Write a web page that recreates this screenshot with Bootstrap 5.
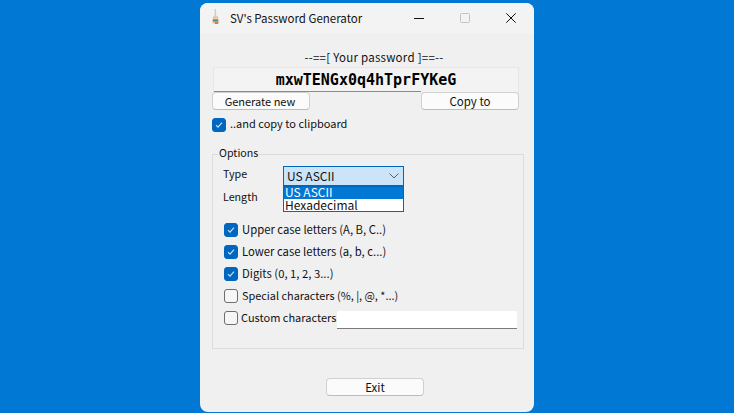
<!DOCTYPE html>
<html lang="en"><head><meta charset="utf-8"><title>SV's Password Generator</title>
<link href="https://cdn.jsdelivr.net/npm/bootstrap@5.3.0/dist/css/bootstrap.min.css" rel="stylesheet">
<style>
html,body{height:100%;margin:0}
body{background:#0078d4;overflow:hidden;font-family:"Noto Sans CJK JP","Noto Sans",sans-serif;font-size:11.5px;line-height:16px;color:#111}
.appwin{position:absolute;left:200px;top:3px;width:334px;height:409px;background:#f0f0f0;border-radius:8px;overflow:hidden}
.tbar{height:30px;background:#f3f3f3;padding-left:10px}
.ttl{font-size:11.5px;margin-left:8px;line-height:14px;padding-bottom:1px}
.wbtn{width:46px;height:30px}
.pw-wrap{padding:0 15px 0 12px;margin-top:16px}
.pw-head{height:18px;line-height:17px;text-align:center;padding-left:17px;letter-spacing:.25px}
.pw-box{height:25px;margin-left:1px;background:#f3f3f3;border:1px solid #e6e6e6;border-bottom:0;position:relative;text-align:center;font-family:"DejaVu Sans Mono",monospace;font-weight:700;font-size:15px;line-height:24px;color:#000}
.pw-line{position:absolute;left:0;bottom:0;width:207px;height:1px;background:#8a8a8a}
.wbutton{width:98px;height:18px;background:#fbfbfb;border:1px solid #d0d0d0;border-bottom-color:#bdbdbd;border-radius:4px;padding:0;font-size:11.5px;line-height:14px;color:#111;display:block}
.wbutton.gen{font-size:11px;padding-right:2px}
.ck{width:14px;height:14px;flex:none;border-radius:3px;border:1px solid #6e6e6e;background:#f6f6f6;display:block}
.ck.on{background:#0067c0;border-color:#0067c0}
.ck svg{display:block}
.cliprow{height:14px}
.cliptxt{font-size:11px;line-height:13px;padding-bottom:3px}
.optfs{margin:22px 10px 0 12px;height:195px;border:1px solid #dcdcdc;position:relative;padding:0 6px 0 10px}
.optleg{position:absolute;left:5px;top:-10px;background:#f0f0f0;padding:0 1px;line-height:16px;font-size:10.7px}
.lab{width:60px;flex:none;font-size:10.7px;line-height:14px;padding-bottom:4px}
.typerow{margin-top:11px;height:20px;position:relative}
.lenrow{margin-top:2px;height:22px}
.cbx{width:121px;height:20px;line-height:18px;border:1px solid #0067c0;background:#cce4f7;padding:0 3px;position:relative;font-size:12px}
.cbx svg{position:absolute;right:4px;top:6px}
.ddl{position:absolute;left:60px;top:20px;width:121px;background:#fff;border:1px solid #0067c0;z-index:5;font-size:12px}
.ddl>div{height:12px;padding-left:1px;line-height:12px}
.ddl .sel{background:#0078d4;color:#fff;line-height:10px}
.ckrow{height:22px;gap:4px;font-size:11.3px;line-height:14px;margin-left:1px}
.ckrow>span:last-child{padding-bottom:2px}
.ckrow .lift{padding-bottom:4px}
.ckrow .nar{font-size:10.9px}
.ckrows{margin-top:9px}
.ctxt{width:96px;flex:none;margin:0 -4px 0 -1px;white-space:nowrap;font-size:11px;padding-top:3px}
.cust{width:180px;flex:none;height:18px;margin-top:4px;background:#fff;border:0;border-bottom:1px solid #7a7a7a;border-radius:2px 2px 0 0;padding:0}
.exitrow{margin-top:29px;padding-left:126px}
</style></head><body>
<div class="appwin d-flex flex-column">
 <div class="tbar d-flex align-items-center">
  <svg width="12" height="18" viewBox="0 0 12 18"><rect x="4.600" y="0" width="1.500" height="7" fill="#d8cdb8"/><path d="M3 8c0-2 5-2 5 0l1.500 5c.5 3-7 3-7.500 0z" fill="#e9c9a8"/><rect x="3" y="10.500" width="5" height="2" fill="#3a8f9e"/><rect x="5" y="13" width="3" height="2" fill="#c8862f"/></svg>
  <span class="ttl">SV's Password Generator</span>
  <div class="ms-auto d-flex">
   <div class="wbtn d-flex align-items-center justify-content-center"><svg width="10" height="10" viewBox="0 0 10 10"><path d="M0 5.500h10" stroke="#111" fill="none"/></svg></div>
   <div class="wbtn d-flex align-items-center justify-content-center"><svg width="10" height="10" viewBox="0 0 10 10"><rect x=".5" y=".5" width="9" height="9" rx="1" fill="none" stroke="#c4c4c4"/></svg></div>
   <div class="wbtn d-flex align-items-center justify-content-center"><svg width="10" height="10" viewBox="0 0 10 10"><path d="M.3.300l9.400 9.400M9.700.300L.3 9.700" stroke="#111" fill="none"/></svg></div>
  </div>
 </div>
 <div class="pw-wrap">
  <div class="pw-head">--==[ Your password ]==--</div>
  <div class="pw-box">mxwTENGx0q4hTprFYKeG<span class="pw-line"></span></div>
  <div class="d-flex justify-content-between">
   <button type="button" class="wbutton gen">Generate new</button>
   <button type="button" class="wbutton">Copy to</button>
  </div>
  <div class="cliprow d-flex align-items-center mt-2 gap-1">
   <span class="ck on"><svg width="12" height="12" viewBox="0 0 12 12"><path d="M3 6.200l2 2 4-4.500" stroke="#cfe4f7" stroke-width="1.100" fill="none"/></svg></span>
   <span class="cliptxt">..and copy to clipboard</span>
  </div>
 </div>
 <div class="optfs">
  <span class="optleg">Options</span>
  <div class="typerow d-flex align-items-center">
   <span class="lab">Type</span>
   <div class="cbx">US ASCII<svg width="10" height="6" viewBox="0 0 10 6"><path d="M.5.500L5 5 9.500.5" stroke="#606060" fill="none"/></svg></div>
   <div class="ddl"><div class="sel">US ASCII</div><div>Hexadecimal</div></div>
  </div>
  <div class="lenrow d-flex align-items-center"><span class="lab">Length</span></div>
  <div class="ckrows">
   <div class="ckrow d-flex align-items-center"><span class="ck on"><svg width="12" height="12" viewBox="0 0 12 12"><path d="M3 6.200l2 2 4-4.500" stroke="#cfe4f7" stroke-width="1.100" fill="none"/></svg></span><span>Upper case letters (A, B, C..)</span></div>
   <div class="ckrow d-flex align-items-center"><span class="ck on"><svg width="12" height="12" viewBox="0 0 12 12"><path d="M3 6.200l2 2 4-4.500" stroke="#cfe4f7" stroke-width="1.100" fill="none"/></svg></span><span class="lift">Lower case letters (a, b, c...)</span></div>
   <div class="ckrow d-flex align-items-center"><span class="ck on"><svg width="12" height="12" viewBox="0 0 12 12"><path d="M3 6.200l2 2 4-4.500" stroke="#cfe4f7" stroke-width="1.100" fill="none"/></svg></span><span class="lift">Digits (0, 1, 2, 3...)</span></div>
   <div class="ckrow d-flex align-items-center"><span class="ck"></span><span class="nar lift">Special characters (%, |, @, *...)</span></div>
   <div class="ckrow d-flex align-items-start"><span class="ck mt-1"></span><span class="ctxt">Custom characters</span><input class="cust" type="text" aria-label="Custom characters"></div>
  </div>
 </div>
 <div class="exitrow"><button type="button" class="wbutton">Exit</button></div>
</div>
</body></html>
